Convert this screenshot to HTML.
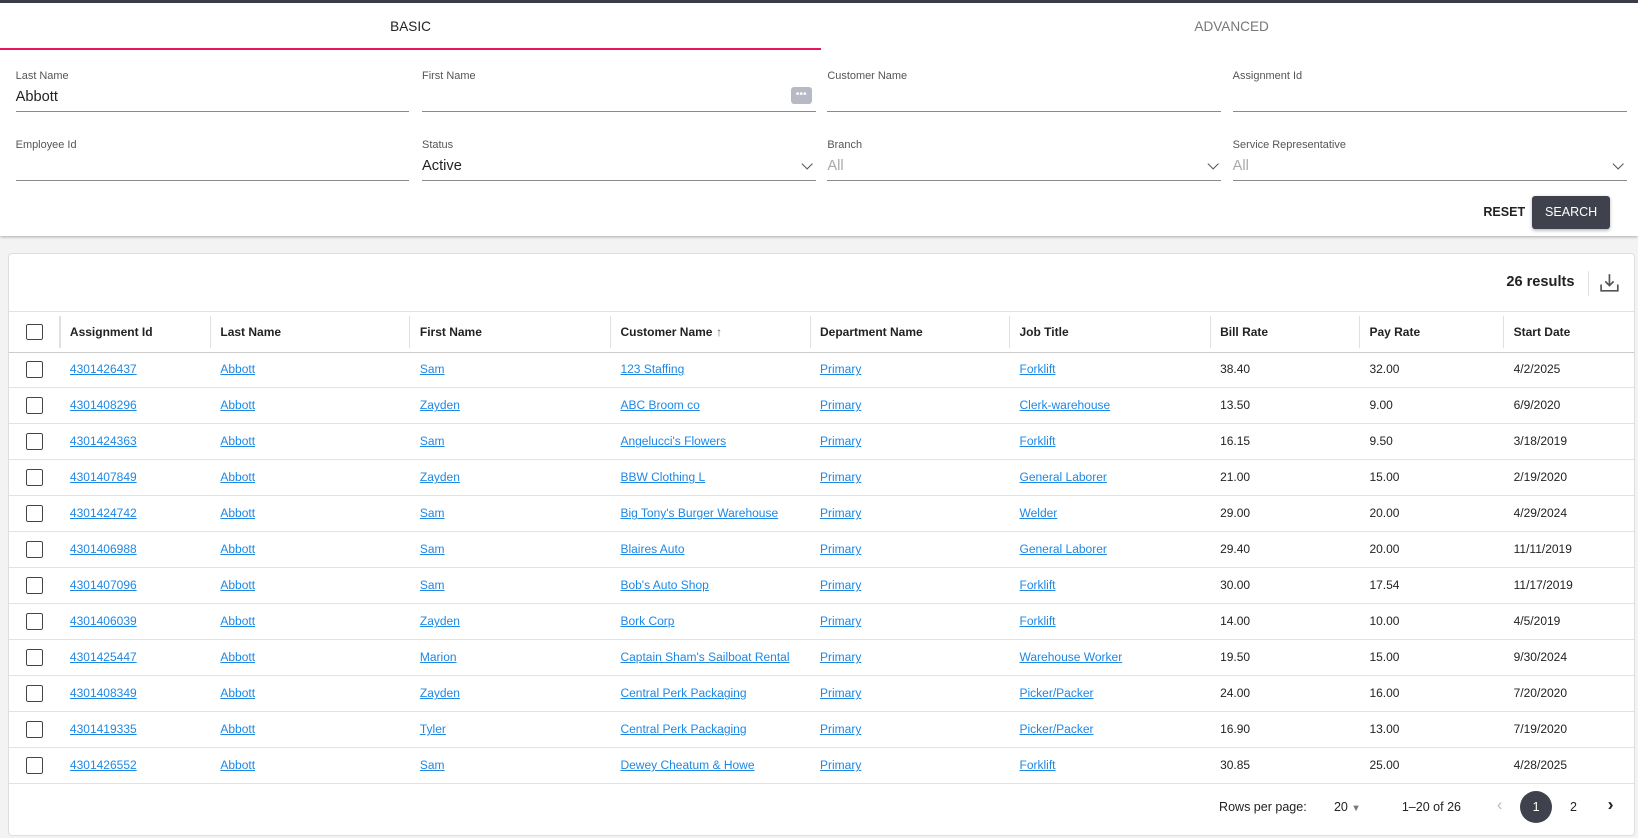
<!DOCTYPE html>
<html><head><meta charset="utf-8"><style>
html,body{margin:0;padding:0;}
body{width:1568px;height:802px;zoom:1.04464;background:#f3f3f3;font-family:"Liberation Sans","DejaVu Sans",sans-serif;color:#222;overflow:hidden;position:relative}
.top{position:absolute;left:0;top:0;width:1568px;height:3px;background:#3b3d48}
.card{position:absolute;left:0;top:3px;width:1568px;height:223px;background:#fff;box-shadow:0 1px 3px rgba(0,0,0,.35)}
.tab{position:absolute;top:0;height:45px;line-height:45px;text-align:center;font-size:13px;width:786px}
.f{position:absolute;width:377px;height:36px;border-bottom:1px solid #8a8a8a}
.f .l{position:absolute;top:-3px;left:0;font-size:10.5px;color:#555}
.f .v{position:absolute;top:15px;left:0;font-size:14px;color:#222}
.f .v.g{color:#aaa}
.chev{position:absolute;right:4px;top:17px;width:7px;height:7px;border-right:1.5px solid #555;border-bottom:1.5px solid #555;transform:rotate(45deg)}
.tbl{position:absolute;left:8px;top:242px;width:1555px;height:556px;background:#fff;border:1px solid #ddd;border-radius:4px}
.row{position:absolute;left:0;width:1555px;border-bottom:1px solid #e2e2e2;font-size:11.5px}
.c{position:absolute;top:0;white-space:nowrap}
a{color:#1e88e5;text-decoration:underline}
.cb{position:absolute;left:16px;width:14px;height:14px;border:1.5px solid #444;border-radius:2px}
.sep{position:absolute;width:1px;background:#e0e0e0}
</style></head><body>
<div class="top"></div>
<div class="card">
<div class="tab" style="left:0;color:#222">BASIC</div>
<div style="position:absolute;left:0;top:43px;width:786px;height:2px;background:#e8195b"></div>
<div class="tab" style="left:786px;color:#777">ADVANCED</div>
<div class="f" style="left:15px;top:67px"><div class="l">Last Name</div><div class="v">Abbott</div></div>
<div class="f" style="left:404px;top:67px"><div class="l">First Name</div><div style="position:absolute;right:4px;top:13px;width:20px;height:17px;background:#b7bac4;border-radius:3px;color:#fff;font-size:10px;text-align:center;line-height:16px">•••</div></div>
<div class="f" style="left:792px;top:67px"><div class="l">Customer Name</div></div>
<div class="f" style="left:1180px;top:67px"><div class="l">Assignment Id</div></div>
<div class="f" style="left:15px;top:133px"><div class="l">Employee Id</div></div>
<div class="f" style="left:404px;top:133px"><div class="l">Status</div><div class="v">Active</div><div class="chev"></div></div>
<div class="f" style="left:792px;top:133px"><div class="l">Branch</div><div class="v g">All</div><div class="chev"></div></div>
<div class="f" style="left:1180px;top:133px"><div class="l">Service Representative</div><div class="v g">All</div><div class="chev"></div></div>
<div style="position:absolute;left:1420px;top:193px;font-size:12px;font-weight:bold">RESET</div>
<div style="position:absolute;left:1467px;top:185px;width:74px;height:31px;background:#3f414d;border-radius:3px;color:#fff;font-size:12px;line-height:31px;text-align:center;box-shadow:0 1px 3px rgba(0,0,0,.3)">SEARCH</div>
</div>
<div class="tbl">
<div style="position:absolute;left:1433px;top:19px;font-size:14px;font-weight:bold">26 results</div>
<div class="sep" style="left:1511px;top:16px;height:24px"></div>
<svg style="position:absolute;left:1522px;top:17px" width="20" height="20" viewBox="0 0 20 20" fill="none" stroke="#555" stroke-width="1.6"><path d="M10 2v11M6 9l4 4 4-4M2 12v6h16v-6"/></svg>
<div id="rows"></div>
</div>
<script>
var cols=[58,202,393,585,776,967,1159,1302,1440];
var hd=["Assignment Id","Last Name","First Name","Customer Name","Department Name","Job Title","Bill Rate","Pay Rate","Start Date"];
var d=[["4301426437","Abbott","Sam","123 Staffing","Forklift","38.40","32.00","4/2/2025"],
["4301408296","Abbott","Zayden","ABC Broom co","Clerk-warehouse","13.50","9.00","6/9/2020"],
["4301424363","Abbott","Sam","Angelucci's Flowers","Forklift","16.15","9.50","3/18/2019"],
["4301407849","Abbott","Zayden","BBW Clothing L","General Laborer","21.00","15.00","2/19/2020"],
["4301424742","Abbott","Sam","Big Tony's Burger Warehouse","Welder","29.00","20.00","4/29/2024"],
["4301406988","Abbott","Sam","Blaires Auto","General Laborer","29.40","20.00","11/11/2019"],
["4301407096","Abbott","Sam","Bob's Auto Shop","Forklift","30.00","17.54","11/17/2019"],
["4301406039","Abbott","Zayden","Bork Corp","Forklift","14.00","10.00","4/5/2019"],
["4301425447","Abbott","Marion","Captain Sham's Sailboat Rental","Warehouse Worker","19.50","15.00","9/30/2024"],
["4301408349","Abbott","Zayden","Central Perk Packaging","Picker/Packer","24.00","16.00","7/20/2020"],
["4301419335","Abbott","Tyler","Central Perk Packaging","Picker/Packer","16.90","13.00","7/19/2020"],
["4301426552","Abbott","Sam","Dewey Cheatum & Howe","Forklift","30.85","25.00","4/28/2025"]];
var h='<div class="row" style="top:55px;height:38px;border-top:1px solid #e2e2e2;border-bottom:1px solid #ccc"><div class="cb" style="top:11px"></div>';
for(var i=0;i<9;i++){h+='<div class="sep" style="left:'+(cols[i]-10)+'px;top:4px;height:30px"></div><div class="c" style="left:'+cols[i]+'px;top:12px;font-weight:bold">'+hd[i]+(i==3?' <span style="color:#666;font-weight:normal">&#8593;</span>':'')+'</div>';}
h+='</div>';
for(var r=0;r<12;r++){var t=94+r*34.45;var x=d[r];
var cells=[x[0],x[1],x[2],x[3],"Primary",x[4],x[5],x[6],x[7]];
h+='<div class="row" style="top:'+t+'px;height:33.5px"><div class="cb" style="top:9px"></div>';
for(var i=0;i<9;i++){var txt=cells[i].replace(/&/g,'&amp;');h+='<div class="c" style="left:'+cols[i]+'px;top:10px">'+(i<6?'<a>'+txt+'</a>':txt)+'</div>';}
h+='</div>';}
h+='<div style="position:absolute;top:523px;left:1158px;font-size:12px">Rows per page:</div><div style="position:absolute;top:523px;left:1268px;font-size:12px">20 <span style="color:#777;font-size:9px">&#9660;</span></div><div style="position:absolute;top:523px;left:1333px;font-size:12px">1–20 of 26</div><div style="position:absolute;top:518px;left:1424px;font-size:16px;color:#bbb">&#8249;</div><div style="position:absolute;top:514px;left:1446px;width:31px;height:31px;border-radius:50%;background:#3f414d;color:#fff;font-size:12px;text-align:center;line-height:31px">1</div><div style="position:absolute;top:523px;left:1494px;font-size:12px">2</div><div style="position:absolute;top:517px;left:1530px;font-size:17px;font-weight:bold">&#8250;</div>';
document.getElementById('rows').innerHTML=h;
</script>
</body></html>
